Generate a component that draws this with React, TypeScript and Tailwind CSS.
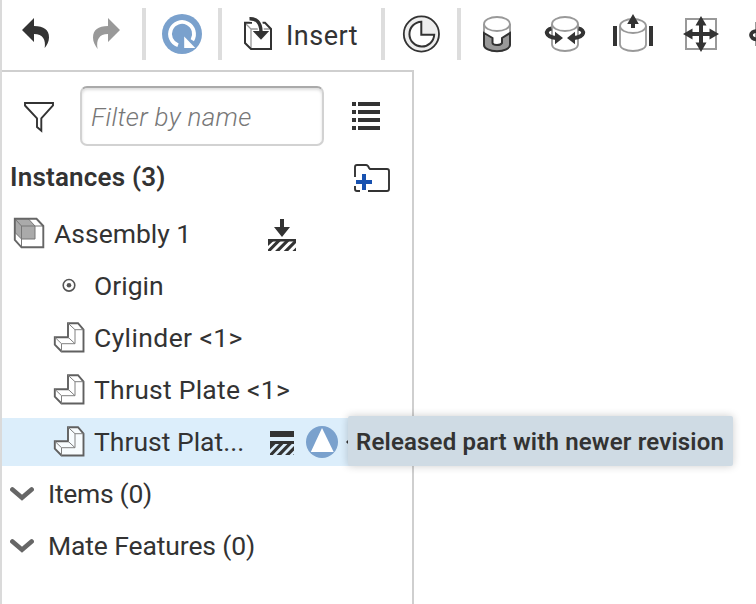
import type { ReactNode } from 'react';

const DARK = '#333333';
const BLUE = '#7aa1cd';

type IconProps = { box: string; className: string; children: ReactNode };

function Icon({ box, className, children }: IconProps) {
  return (
    <svg viewBox={box} fill="none" className={`block shrink-0 ${className}`} aria-hidden="true">
      {children}
    </svg>
  );
}

function Separator({ className }: { className: string }) {
  return <div className={`h-[52px] w-1 shrink-0 bg-[#dddddd] ${className}`} />;
}

function Cylinder({ cx, top = 24 }: { cx: number; top?: number }) {
  return (
    <g stroke="#999" strokeWidth="1.8">
      <path d={`M${cx - 13} ${top}V44.5a13 6.5 0 0 0 26 0V${top}`} fill="white" />
      <ellipse cx={cx} cy={top} rx="13" ry="7" fill="white" />
    </g>
  );
}

function Toolbar() {
  return (
    <div className="flex h-[70px] items-center overflow-hidden pb-[2px]">
      <Icon box="20 14 32 40" className="ml-[18px] h-10 w-8">
        <path d="M22 30 34 18V26C44 26 49 30 49 37.5C49 42 47 45 44.7 48C46 40 43 34 34 34V42Z" fill={DARK} />
      </Icon>
      <Icon box="90 14 32 40" className="ml-[38px] h-10 w-8">
        <path d="M120 30 108 18V26C98 26 93 30 93 37.5C93 42 95 45 97.6 49C96 40 99 34 108 34V42Z" fill="#999" />
      </Icon>
      <Separator className="ml-5" />
      <Icon box="162 14 40 40" className="ml-4 h-10 w-10">
        <circle cx="182" cy="34" r="20" fill={BLUE} />
        <path d="M178 45.3A12 12 0 1 1 192.3 40.2" stroke="white" strokeWidth="3.8" />
        <path d="M184.2 36.5V48H195.3Z" fill="white" />
      </Icon>
      <Separator className="ml-4" />
      <Icon box="242 14 32 40" className="ml-5 h-10 w-8">
        <path d="M245 23H265L271 29V49H251L245 43Z" fill="white" />
        <path d="M245 23 251 29V49M251 29H271" stroke="#999" strokeWidth="1.3" />
        <path d="M252 22.8H245V43L251 49H271V29L265 22.8H262.5" stroke={DARK} strokeWidth="2" />
        <path d="M249.5 18.8C256 18.5 261 22 261 32" stroke="white" strokeWidth="6" />
        <path d="M249.5 18.8C256 18.5 261 22 261 32" stroke={DARK} strokeWidth="3.4" />
        <path d="M252.8 31H269.2L261 39.7Z" fill={DARK} />
      </Icon>
      <span className="ml-3 w-[95px] shrink-0 pt-[5px] text-[27px] tracking-[0.5px]">Insert</span>
      <Separator className="" />
      <Icon box="401 14 40 40" className="ml-4 h-10 w-10">
        <circle cx="421.4" cy="34" r="17.6" fill="#eee" stroke={DARK} strokeWidth="1.8" />
        <path d="M421.3 21.7V34.7H434.2A12.4 12.4 0 1 1 421.3 21.7Z" fill="white" stroke={DARK} strokeWidth="2" />
      </Icon>
      <Separator className="ml-4" />
      <Icon box="480 14 34 40" className="ml-[19px] h-10 w-[34px]">
        <Cylinder cx={497} />
        <path d="M484 33 492.5 38V43Q493 45 497 45T502 43V38L510 33V45A13 6.3 0 0 1 484 45Z" fill="#999" stroke={DARK} strokeWidth="2" />
      </Icon>
      <Icon box="543 14 44 40" className="ml-[29px] h-10 w-11">
        <Cylinder cx={565} />
        <path d="M551.5 28.5C544.5 30 545 37 556 38M578.5 28.5C585.5 30 585 37 574 38" stroke={DARK} strokeWidth="4" />
        <path d="M555 31.8 563 38 555 44.2ZM575 31.8 567 38 575 44.2Z" fill={DARK} />
      </Icon>
      <Icon box="610 14 46 40" className="ml-[23px] h-10 w-[46px]">
        <Cylinder cx={633} top={26} />
        <path d="M613 26h4v20h-4ZM649 26h4v20h-4ZM633 14 638.8 24H635V28H631V24H627.2Z" fill={DARK} />
      </Icon>
      <Icon box="682 14 38 40" className="ml-[26px] h-10 w-[38px]">
        <path d="M686 19H716V49H686Z" stroke="#999" strokeWidth="2" />
        <path d="M701 22V46M689 34H713" stroke={DARK} strokeWidth="4" />
        <path d="M701 16 706.5 25.5H695.5ZM701 52 706.5 42.5H695.5ZM683 34 692.5 28.5V39.5ZM719 34 709.5 28.5V39.5Z" fill={DARK} />
      </Icon>
      <Icon box="746 14 10 40" className="ml-[26px] h-10 w-[10px]">
        <path d="M755.5 22V46" stroke="#999" />
        <path d="M757 31C749 31 749 39 757 39.5" stroke={DARK} strokeWidth="3.8" />
      </Icon>
    </div>
  );
}

function PartIcon() {
  return (
    <Icon box="52 320 34 34" className="ml-[50px] size-[34px]">
      <path d="M68 322.2H78L83.5 328.7V350.5H61.5L54.8 343.7V336.2H68Z" fill="white" fillOpacity="0.8" stroke="#606060" strokeWidth="1.9" />
      <path d="M68 322.2 75 328.7H83.5M75 328.7V342.7H61.5V350.7M54.8 336.2 61.5 342.7M68 336.2 75 342.7" stroke="#808080" strokeWidth="1" />
    </Icon>
  );
}

function Row({ children, selected = false }: { children: ReactNode; selected?: boolean }) {
  return <div className={`flex h-12 items-center whitespace-nowrap ${selected ? 'bg-[#dceefb]' : ''}`}>{children}</div>;
}

function Chevron() {
  return (
    <Icon box="10 484 24 20" className="ml-2 h-5 w-6">
      <path d="M12.4 489.5 22 497.8 31.6 489.5" stroke="#666" strokeWidth="4.6" strokeLinecap="round" />
    </Icon>
  );
}

function Tree() {
  return (
    <div className="flex flex-col gap-1 text-[26.5px]">
      <Row>
        <Icon box="12 216 34 36" className="ml-[10px] h-9 w-[34px]">
          <path d="M14.8 218.8H36.5L43.3 226V247.3H21.5L14.8 240Z" fill="white" />
          <path d="M15 219H28.5L35 226V239H21.5L15 232.5Z" fill="#aaa" />
          <path d="M15 219 21.5 226H43M21.5 226V247M28.5 219 35 226V239H21.5L15 232.5" stroke="#777" strokeWidth="1" />
          <path d="M14.8 218.8H36.5L43.3 226V247.3H21.5L14.8 240Z" stroke="#666" strokeWidth="1.9" />
        </Icon>
        <span className="ml-2 w-[212px]">Assembly 1</span>
        <Icon box="266 217 30 34" className="h-[34px] w-[30px]">
          <path d="M280 219h4v8h6l-8 10-8-10h6ZM268 239h28v2.4h-28Z" fill={DARK} />
          <path d="M268 246V241H273.5ZM268 251V249.5L276.3 241H280.7L270.8 251ZM275 251 285 241H289.4L279.5 251ZM283.7 251 293.7 241H296V243L288.2 251ZM292.4 251 296 247.4V251Z" fill={DARK} />
        </Icon>
      </Row>
      <Row>
        <Icon box="59 276 20 20" className="ml-[57px] size-5">
          <circle cx="69" cy="285.3" r="5.8" stroke="#555" strokeWidth="1.6" />
          <circle cx="69" cy="285.3" r="2.3" fill="#555" />
        </Icon>
        <span className="ml-[15px]">Origin</span>
      </Row>
      <Row>
        <PartIcon />
        <span className="ml-2 tracking-[0.4px]">Cylinder &lt;1&gt;</span>
      </Row>
      <Row>
        <PartIcon />
        <span className="ml-2 tracking-[0.25px]">Thrust Plate &lt;1&gt;</span>
      </Row>
      <Row selected>
        <PartIcon />
        <span className="ml-2 w-[176px]">Thrust Plat...</span>
        <Icon box="270 429 24 26" className="h-[26px] w-6">
          <path d="M270 431h24v6h-24ZM270 441h24v3h-24Z" fill={DARK} />
          <path d="M270 449.5V444H275.5ZM270 455V453.5L279 444H283.4L272.8 455ZM276.6 455 287.4 444H291.8L281.2 455ZM285 455 294 446V450.4L289.5 455ZM293 455 294 454V455Z" fill={DARK} />
        </Icon>
        <Icon box="306 426 32 34" className="ml-3 h-[34px] w-8">
          <circle cx="322" cy="443" r="16" fill={BLUE} />
          <path d="M322 429 333.7 453H310.8Z" fill="white" />
        </Icon>
        <Icon box="344 436 6 14" className="ml-[6px] h-[14px] w-[6px]">
          <path d="M346 443 350 439V447Z" fill={DARK} />
        </Icon>
      </Row>
      <Row>
        <Chevron />
        <span className="ml-[14px] tracking-[-0.3px]">Items (0)</span>
      </Row>
      <Row>
        <Chevron />
        <span className="ml-[14px] tracking-[-0.12px]">Mate Features (0)</span>
      </Row>
    </div>
  );
}

export default function App() {
  return (
    <div className="relative h-[604px] w-[756px] overflow-hidden border-l-2 border-[#dadada] bg-white font-[Roboto,'Noto_Sans',sans-serif] text-[#333333]">
      <Toolbar />
      <aside className="h-[534px] w-[412px] border-t-2 border-r-2 border-[#cfcfcf]">
        <div className="flex h-[88px] items-center">
          <Icon box="22 98 34 36" className="ml-5 h-9 w-[34px]">
            <path d="M25 103H53V105.5L41.3 118.3V130.7L37 127V118.3L25 105.5Z" fill="white" stroke={DARK} strokeWidth="1.9" />
          </Icon>
          <input
            placeholder="Filter by name"
            className="ml-6 h-[60px] w-[244px] rounded-[7px] border-2 border-[#d2d2d2] border-t-[#aaaaaa] px-[9px] pt-[2px] text-[26px] font-light tracking-[0.3px] italic shadow-[inset_0_2px_3px_#dddddd] outline-none placeholder:text-[#777777] placeholder:opacity-100"
          />
          <Icon box="350 100 32 32" className="ml-[26px] size-8">
            <path d="M352 102h4v4h-4ZM358 102h22v4h-22ZM352 110h4v4h-4ZM358 110h22v4h-22ZM352 118h4v4h-4ZM358 118h22v4h-22ZM352 126h4v4h-4ZM358 126h22v4h-22Z" fill={DARK} />
          </Icon>
        </div>
        <div className="flex h-[50px] items-center pb-[14px]">
          <span className="ml-2 w-[342px] pb-[2px] text-[26px] font-semibold tracking-[0.2px]">Instances (3)</span>
          <Icon box="352 160 40 36" className="h-9 w-10">
            <path d="M355 177V167Q355 165 357 165H366Q368 165 369 168L370 169H387Q389 169 389 171V189Q389 191 387 191H368M360 191H357Q355 191 355 189V186" stroke={DARK} strokeWidth="1.9" />
            <path d="M356 182H372M364 174V190" stroke="#1751b0" strokeWidth="4" />
          </Icon>
        </div>
        <Tree />
      </aside>
      <div className="absolute top-[416px] left-[346px] flex h-[50px] w-[385px] items-center rounded-[2px] bg-[#cfdbe4] pt-px pl-2 text-[24px] font-semibold tracking-[0.17px] whitespace-nowrap shadow-[0_0_8px_rgba(0,0,0,0.2)]">
        <span>Released part with newer revision</span>
      </div>
    </div>
  );
}
